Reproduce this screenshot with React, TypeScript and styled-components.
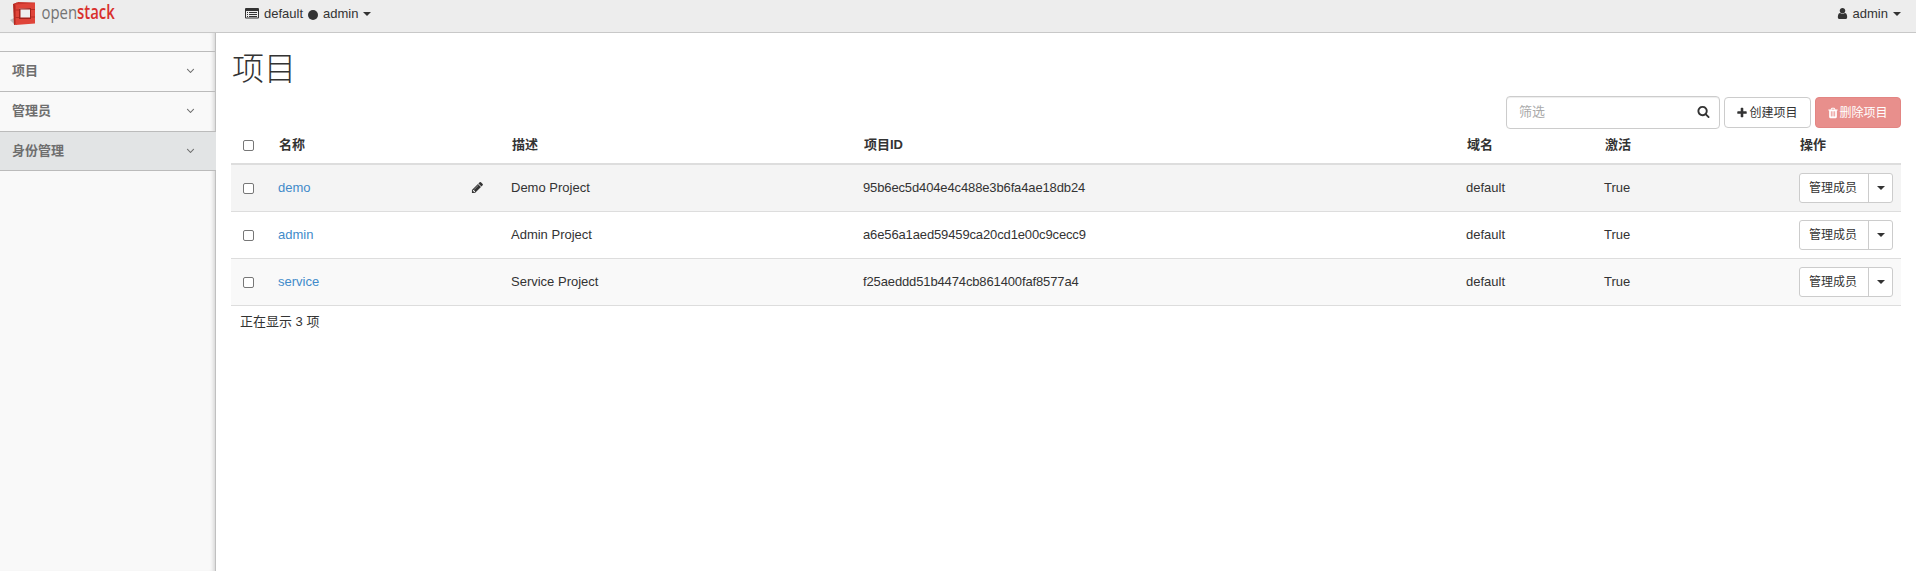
import React from "react";
import styled, { createGlobalStyle } from "styled-components";

const Global = createGlobalStyle`
  *, *::before, *::after { box-sizing: border-box; }
  html, body { margin: 0; background: #fff; }
  body {
    font-family: "Liberation Sans", "Noto Sans CJK SC", sans-serif;
    font-size: 13px;
    line-height: 18px;
    color: #333;
    overflow: hidden;
  }
`;

const paths = {
  user: "M1536 1399q0 109-62.5 187t-150.5 78h-854q-88 0-150.5-78t-62.5-187q0-85 8.5-160.5t31.5-152 58.5-131 94-89 134.5-34.5q131 128 313 128t313-128q76 0 134.5 34.5t94 89 58.5 131 31.5 152 8.5 160.5zm-256-887q0 159-112.5 271.5t-271.5 112.5-271.5-112.5-112.5-271.5 112.5-271.5 271.5-112.5 271.5 112.5 112.5 271.5z",
  search: "M1216 832q0-185-131.5-316.5t-316.5-131.5-316.5 131.5-131.5 316.5 131.5 316.5 316.5 131.5 316.5-131.5 131.5-316.5zm512 832q0 52-38 90t-90 38q-54 0-90-38l-343-342q-179 124-399 124-143 0-273.5-55.5t-225-150-150-225-55.5-273.5 55.5-273.5 150-225 225-150 273.5-55.5 273.5 55.5 225 150 150 225 55.5 273.5q0 220-124 399l343 343q37 37 37 90z",
  plus: "M1600 736v192q0 40-28 68t-68 28h-416v416q0 40-28 68t-68 28h-192q-40 0-68-28t-28-68v-416h-416q-40 0-68-28t-28-68v-192q0-40 28-68t68-28h416v-416q0-40 28-68t68-28h192q40 0 68 28t28 68v416h416q40 0 68 28t28 68z",
  trash: "M704 1376v-704q0-14-9-23t-23-9h-64q-14 0-23 9t-9 23v704q0 14 9 23t23 9h64q14 0 23-9t9-23zm256 0v-704q0-14-9-23t-23-9h-64q-14 0-23 9t-9 23v704q0 14 9 23t23 9h64q14 0 23-9t9-23zm256 0v-704q0-14-9-23t-23-9h-64q-14 0-23 9t-9 23v704q0 14 9 23t23 9h64q14 0 23-9t9-23zm-544-992h448l-48-117q-7-9-17-11h-317q-10 2-17 11zm928 32v64q0 14-9 23t-23 9h-96v948q0 83-47 143.5t-113 60.5h-832q-66 0-113-58.5t-47-141.5v-952h-96q-14 0-23-9t-9-23v-64q0-14 9-23t23-9h309l70-167q15-37 54-63t79-26h320q40 0 79 26t54 63l70 167h309q14 0 23 9t9 23z",
  pencil: "M491 1536l91-91-235-235-91 91v107h128v128h107zm523-928q0-22-22-22-10 0-17 7l-542 542q-7 7-7 17 0 22 22 22 10 0 17-7l542-542q7-7 7-17zm-54-192l416 416-832 832h-416v-416zm683 96q0 53-37 90l-166 166-416-416 166-165q36-38 90-38 53 0 91 38l235 234q37 39 37 91z",
  angleDown: "M1395 736q0 13-10 23l-466 466q-10 10-23 10t-23-10l-466-466q-10-10-10-23t10-23l50-50q10-10 23-10t23 10l393 393 393-393q10-10 23-10t23 10l50 50q10 10 10 23z",
};

const Svg = styled.svg`
  display: block;
  flex: none;
  fill: currentColor;
`;

const Icon = ({ name, size = 13 }: { name: keyof typeof paths; size?: number }) => (
  <Svg width={size} height={size} viewBox="0 0 1792 1792"><path d={paths[name]} /></Svg>
);

const ListIcon = () => (
  <Svg width="14" height="11" viewBox="0 0 14 11">
    <path fillRule="evenodd" d="M1 0h12a1 1 0 0 1 1 1v8.5a1 1 0 0 1-1 1H1a1 1 0 0 1-1-1V1a1 1 0 0 1 1-1zM1 3v6.5h12V3z" />
    <path d="M2 4h1v1H2zM4 4h8v1H4zM2 6h1v1H2zM4 6h8v1H4zM2 8h1v1H2zM4 8h8v1H4z" />
  </Svg>
);

const Caret = styled.span`
  width: 0;
  height: 0;
  border: 4px solid transparent;
  border-top-color: currentColor;
  border-bottom: 0;
`;

const TopBar = styled.header`
  display: flex;
  justify-content: space-between;
  height: 33px;
  padding: 0 15px 0 10px;
  background: #ededed;
  border-bottom: 1px solid #c8c8c8;
`;

const TopLeft = styled.div`
  display: flex;
`;

const Brand = styled.div`
  width: 235px;
`;

const Menu = styled.div`
  display: flex;
  align-items: center;
  height: 27px;
`;

const MenuText = styled.span<{ $left: number; $right: number }>`
  margin: 0 ${(p) => p.$right}px 0 ${(p) => p.$left}px;
`;

const Dot = styled.span`
  width: 10px;
  height: 10px;
  margin-top: 2px;
  border-radius: 50%;
  background: #333;
`;

const Body = styled.div`
  display: flex;
  height: 538px;
`;

const Sidebar = styled.nav`
  width: 216px;
  padding-top: 18px;
  background: #f9f9f9;
  border-right: 1px solid #c0c0c0;
  box-shadow: inset -4px 0 4px -3px #ccc;
`;

const SideItem = styled.div<{ $active?: boolean }>`
  display: flex;
  align-items: center;
  justify-content: space-between;
  width: ${(p) => (p.$active ? 216 : 215)}px;
  height: 40px;
  padding: 0 ${(p) => (p.$active ? 19 : 18)}px ${(p) => (p.$active ? 1 : 2)}px 12px;
  border-top: 1px solid #bbb;
  border-bottom: ${(p) => (p.$active ? "1px solid #bbb" : "0")};
  background: ${(p) => (p.$active ? "#e2e4e5" : "transparent")};
  color: #6e6e6e;
  font-weight: 700;
`;

const Main = styled.main`
  flex: 1;
  padding: 11px 15px 0;
`;

const Title = styled.h1`
  margin: 0;
  height: 52px;
  padding-left: 1px;
  font: 300 32px/44px "Noto Sans CJK SC", sans-serif;
  color: #333;
`;

const Toolbar = styled.div`
  display: flex;
  justify-content: flex-end;
  align-items: center;
  height: 33px;
`;

const Filter = styled.div`
  display: flex;
  align-items: center;
  justify-content: space-between;
  width: 214px;
  height: 33px;
  padding: 0 9px 2px 12px;
  border: 1px solid #ccc;
  border-radius: 4px;
  box-shadow: inset 0 1px 1px rgba(0, 0, 0, 0.075);
`;

const Placeholder = styled.span`
  color: #aaa;
`;

const Button = styled.button<{ $danger?: boolean }>`
  display: flex;
  align-items: center;
  justify-content: center;
  gap: ${(p) => (p.$danger ? 0 : 1)}px;
  width: ${(p) => (p.$danger ? 86 : 87)}px;
  height: 31px;
  margin-left: 4px;
  padding: 0 1px 0 0;
  border: 1px solid ${(p) => (p.$danger ? "#e38583" : "#ccc")};
  border-radius: 4px;
  background: ${(p) => (p.$danger ? "#e88f8c" : "#fff")};
  color: ${(p) => (p.$danger ? "#fff" : "#333")};
  font: 12px/18px "Liberation Sans", "Noto Sans CJK SC", sans-serif;
`;

const Table = styled.div`
  width: 1670px;
`;

const Row = styled.div<{ $bg?: string }>`
  display: grid;
  grid-template-columns: 39px 233px 352px 603px 138px 195px 1fr;
  align-items: center;
  height: 47px;
  padding: 0 8px;
  border-bottom: 1px solid #ddd;
  background: ${(p) => p.$bg || "#fff"};
`;

const HeadRow = styled(Row)`
  height: 36px;
  padding-bottom: 2px;
  border-bottom: 2px solid #ddd;
  font-weight: 700;
`;

const Cell = styled.div`
  padding-bottom: 1px;
`;

const HeadCell = styled.div`
  padding-left: 1px;
`;

const IdCell = styled(Cell)`
  letter-spacing: -0.13px;
`;

const NameCell = styled(Cell)`
  display: flex;
  align-items: center;
  justify-content: space-between;
  padding-right: 27px;
`;

const Link = styled.a`
  color: #428bca;
`;

const Check = styled.span`
  display: block;
  width: 11px;
  height: 11px;
  margin-left: 4px;
  border: 1px solid #777;
  border-radius: 2px;
  background: #fff;
`;

const Split = styled.div`
  display: flex;
  width: 94px;
  height: 30px;
  border: 1px solid #ccc;
  border-radius: 3px;
  background: #fff;
  font-size: 12px;
`;

const SplitMain = styled.div`
  width: 69px;
  padding-left: 9px;
  line-height: 29px;
  border-right: 1px solid #ccc;
`;

const SplitToggle = styled.div`
  display: flex;
  flex: 1;
  align-items: center;
  justify-content: center;
`;

const Footer = styled.div`
  padding: 7px 9px;
`;

const Logo = () => (
  <Svg width="110" height="28" viewBox="0 0 110 28">
    <path d="M0 20l4-2v6z" fill="#bbb" />
    <path d="M3 4l4-1.500 0 22-3 .5z" fill="#b3271f" />
    <path d="M4 4l4-2 17 .5v2l-19 1.500z" fill="#c8342b" />
    <path fillRule="evenodd" d="M5.500 4.500l19.500-1.500v20.500l-19.500 1.500zM9 8.500v10.500h12v-11z" fill="#df4439" />
    <path d="M9 8.500l12-.500v11h-12z" fill="#a3231c" />
    <path d="M10.500 9.500h9.500v8h-9.500z" fill="#efefef" />
    <path d="M5.500 10h3.500M21 9.500h4M5.500 17.500h3.500M21 17h4" stroke="#b52d25" strokeWidth="1" />
    <text transform="translate(31.500 18.800) scale(.78 1)" fontFamily="Open Sans" fontSize="19" fill="#747474" textLength="94" lengthAdjust="spacingAndGlyphs">
      open<tspan fill="#d9302c" fontWeight="600">stack</tspan>
    </text>
  </Svg>
);

const projects = [
  { name: "demo", desc: "Demo Project", id: "95b6ec5d404e4c488e3b6fa4ae18db24", bg: "#f4f4f4", editing: true },
  { name: "admin", desc: "Admin Project", id: "a6e56a1aed59459ca20cd1e00c9cecc9", bg: "#fff" },
  { name: "service", desc: "Service Project", id: "f25aeddd51b4474cb861400faf8577a4", bg: "#f9f9f9" },
];

export default function App() {
  return (
    <>
      <Global />
      <TopBar>
        <TopLeft>
          <Brand><Logo /></Brand>
          <Menu>
            <ListIcon />
            <MenuText $left={5} $right={5}>default</MenuText>
            <Dot />
            <MenuText $left={5} $right={5}>admin</MenuText>
            <Caret />
          </Menu>
        </TopLeft>
        <Menu>
          <Icon name="user" />
          <MenuText $left={4} $right={5}>admin</MenuText>
          <Caret />
        </Menu>
      </TopBar>
      <Body>
        <Sidebar>
          <SideItem>项目<Icon name="angleDown" /></SideItem>
          <SideItem>管理员<Icon name="angleDown" /></SideItem>
          <SideItem $active>身份管理<Icon name="angleDown" /></SideItem>
        </Sidebar>
        <Main>
          <Title>项目</Title>
          <Toolbar>
            <Filter><Placeholder>筛选</Placeholder><Icon name="search" /></Filter>
            <Button><Icon name="plus" size={12} />创建项目</Button>
            <Button $danger><Icon name="trash" size={12} />删除项目</Button>
          </Toolbar>
          <Table>
            <HeadRow>
              <Check />
              <HeadCell>名称</HeadCell>
              <HeadCell>描述</HeadCell>
              <HeadCell>项目ID</HeadCell>
              <HeadCell>域名</HeadCell>
              <HeadCell>激活</HeadCell>
              <HeadCell>操作</HeadCell>
            </HeadRow>
            {projects.map((p) => (
              <Row key={p.id} $bg={p.bg}>
                <Check />
                <NameCell><Link>{p.name}</Link>{p.editing && <Icon name="pencil" />}</NameCell>
                <Cell>{p.desc}</Cell>
                <IdCell>{p.id}</IdCell>
                <Cell>default</Cell>
                <Cell>True</Cell>
                <Split>
                  <SplitMain>管理成员</SplitMain>
                  <SplitToggle><Caret /></SplitToggle>
                </Split>
              </Row>
            ))}
          </Table>
          <Footer>正在显示 3 项</Footer>
        </Main>
      </Body>
    </>
  );
}
